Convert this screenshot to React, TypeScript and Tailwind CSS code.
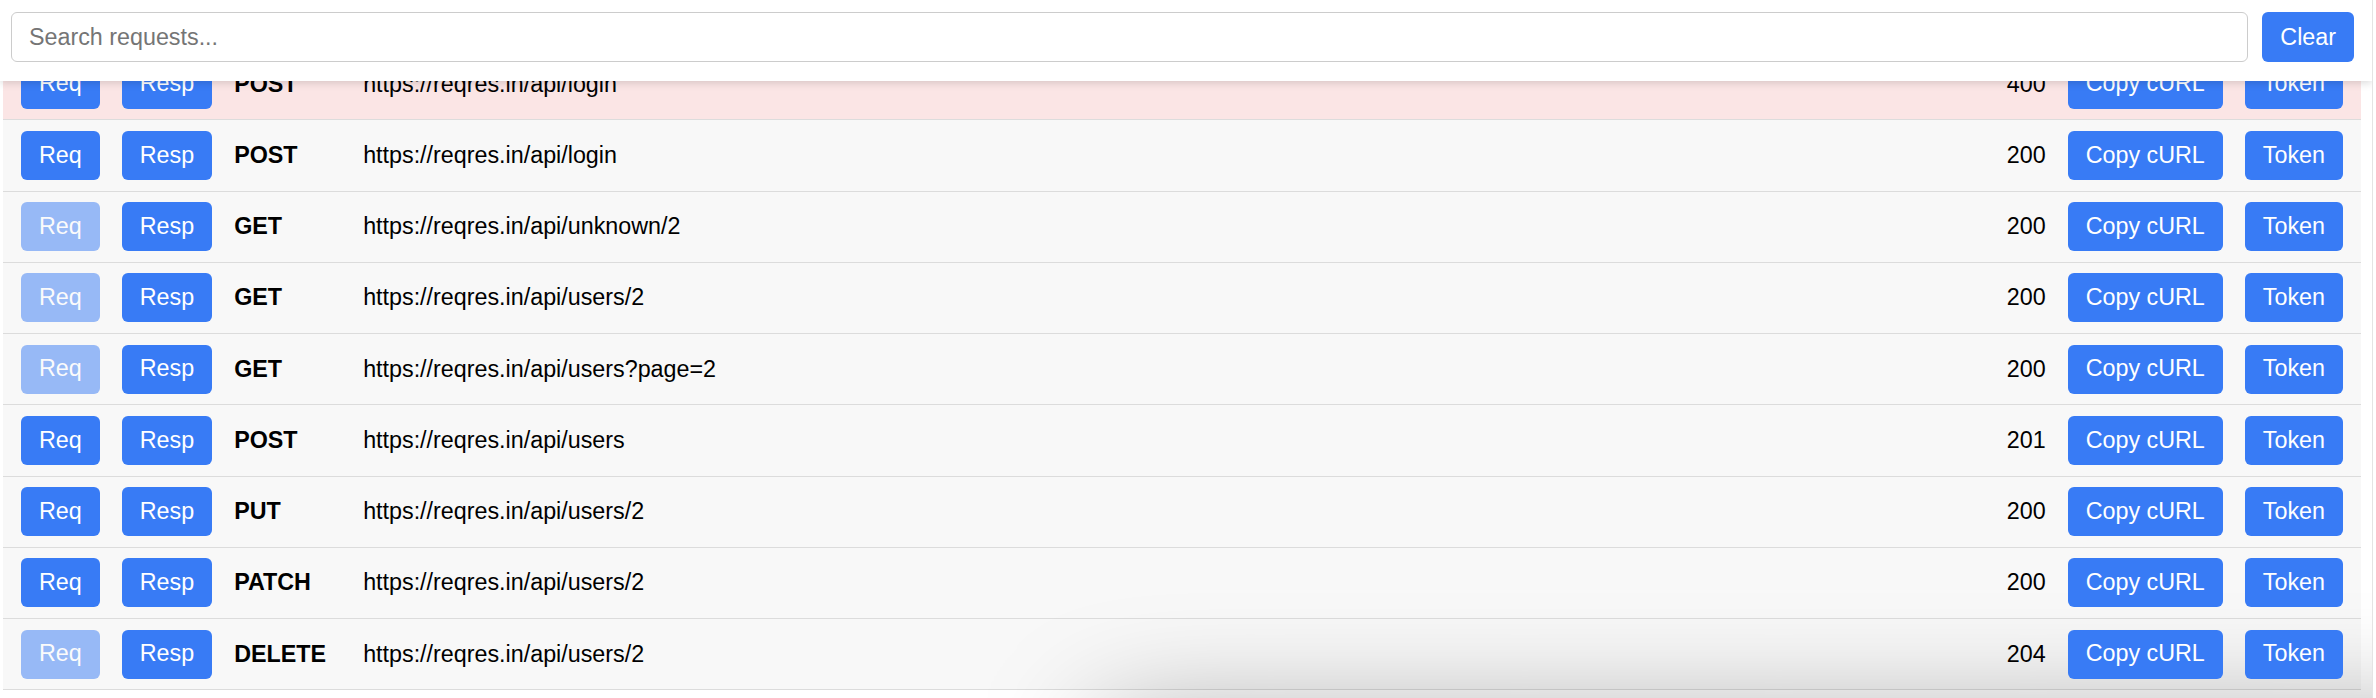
import React from "react";

type Entry = {
  method: string;
  url: string;
  status: number;
  hasReq: boolean;
  failed?: boolean;
};

const entries: Entry[] = [
  { method: "POST", url: "https://reqres.in/api/login", status: 400, hasReq: true, failed: true },
  { method: "POST", url: "https://reqres.in/api/login", status: 200, hasReq: true },
  { method: "GET", url: "https://reqres.in/api/unknown/2", status: 200, hasReq: false },
  { method: "GET", url: "https://reqres.in/api/users/2", status: 200, hasReq: false },
  { method: "GET", url: "https://reqres.in/api/users?page=2", status: 200, hasReq: false },
  { method: "POST", url: "https://reqres.in/api/users", status: 201, hasReq: true },
  { method: "PUT", url: "https://reqres.in/api/users/2", status: 200, hasReq: true },
  { method: "PATCH", url: "https://reqres.in/api/users/2", status: 200, hasReq: true },
  { method: "DELETE", url: "https://reqres.in/api/users/2", status: 204, hasReq: false },
];

const btn =
  "relative z-[1] h-[49px] px-[18px] rounded-[6px] bg-[#387bf5] text-white text-[23.3px] leading-none flex items-center shrink-0";

const Row = ({ e }: { e: Entry }) => {
  return (
    <div
      className={`h-[71.25px] flex items-center gap-[22px] px-[18px] border-b border-[#dcdcdc] ${
        e.failed ? "bg-[#fbe5e5]" : "bg-[#f8f8f8]"
      }`}
    >
      <button className={`${btn} ${e.hasReq ? "" : "opacity-50"}`}>Req</button>
      <button className={btn}>Resp</button>
      <div className="relative z-[1] w-[107px] shrink-0 font-bold text-[23.3px] text-black">{e.method}</div>
      <div className="relative z-[1] flex-1 text-[23.3px] text-black whitespace-nowrap">{e.url}</div>
      <div className="relative z-[1] text-[23.3px] text-black">{e.status}</div>
      <button className={btn}>Copy cURL</button>
      <button className={btn}>Token</button>
    </div>
  );
};

const App = () => {
  return (
    <div
      className="w-full h-[698px] overflow-hidden flex bg-white"
      style={{ fontFamily: '"Liberation Sans", Arial, sans-serif' }}
    >
      <div className="flex-1 relative overflow-hidden">
        <div className="absolute top-0 left-0 right-0 z-10 bg-white flex items-center gap-[14px] pl-[11px] pr-[18px] pt-[12px] pb-[19px] shadow-[0_2px_8px_rgba(0,0,0,0.15)]">
          <input
            className="flex-1 h-[50px] rounded-[6px] border border-[#cccccc] px-[17px] text-[23.3px] text-black placeholder:text-[#757575] outline-none"
            placeholder="Search requests..."
          />
          <button className="h-[50px] px-[18px] rounded-[6px] bg-[#387bf5] text-white text-[23.3px]">
            Clear
          </button>
        </div>

        <div className="pt-[49px] pl-[3px] pr-[11px]">
          {entries.map((e, i) => (
            <Row key={i} e={e} />
          ))}
        </div>

        {/* shadow of a toast sitting just below the fold */}
        <div className="absolute z-0 left-[1100px] w-[1400px] top-[725px] h-[120px] rounded-[16px] bg-white shadow-[0_0_120px_rgba(0,0,0,0.4)]" />
      </div>
      <div className="w-[4px] border-l border-[#e4e4e4] bg-white" />
    </div>
  );
};

export default App;
